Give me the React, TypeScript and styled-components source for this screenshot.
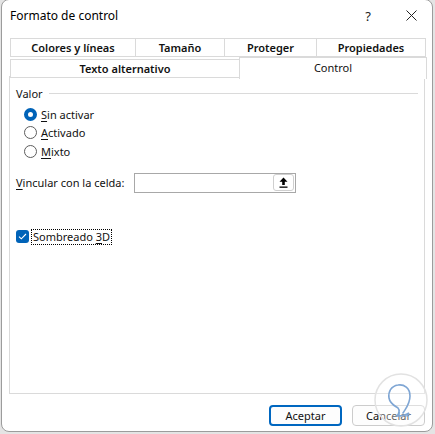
import styled, { createGlobalStyle } from 'styled-components';

const GlobalStyle = createGlobalStyle`
  html, body {
    margin: 0;
    padding: 0;
    background: #e4e4e4;
  }
  body {
    font-family: "Noto Sans", "Open Sans", sans-serif;
    font-size: 11px;
    color: #111;
  }
`;

// Dialog frame
const Window = styled.div`
  position: relative;
  box-sizing: border-box;
  width: 432px;
  height: 433px;
  margin-left: 1px;
  margin-top: -1px;
  background: #ffffff;
  border: 1px solid #9c9c9c;
  border-radius: 8px;
  display: flex;
  flex-direction: column;
  padding: 0 7px 0 6px;
  overflow: hidden;
`;

const TitleBar = styled.div`
  height: 31px;
  display: flex;
  align-items: center;
  padding-left: 2px;
  box-sizing: border-box;
`;

const Title = styled.div`
  flex: 1;
  font-size: 12px;
  color: #000;
`;

const TitleButton = styled.div`
  width: 26px;
  display: flex;
  justify-content: center;
  align-items: center;
  font-size: 13px;
  color: #222;
  margin-left: 16px;
  margin-right: 1px;
`;

const TabsArea = styled.div`
  margin-top: 7px;
  margin-left: 2px;
  display: flex;
  flex-direction: column;
  position: relative;
  z-index: 2;
`;

const TabRow = styled.div<{ cols: string }>`
  display: grid;
  grid-template-columns: ${p => p.cols};
  height: 19px;
  align-items: end;
`;

const Tab = styled.div<{ active?: boolean }>`
  box-sizing: border-box;
  height: ${p => (p.active ? '22px' : '19px')};
  margin-bottom: ${p => (p.active ? '-1px' : '0')};
  border: 1px solid #dadada;
  border-bottom: ${p => (p.active ? 'none' : '1px solid #dadada')};
  margin-left: -1px;
  background: #fff;
  display: flex;
  align-items: center;
  justify-content: center;
  font-size: 11px;
  font-weight: ${p => (p.active ? 400 : 600)};
  color: #111;
  padding-bottom: ${p => (p.active ? '3px' : '0')};
  white-space: nowrap;
  &:first-child {
    margin-left: 0;
  }
`;

const Panel = styled.div`
  box-sizing: border-box;
  height: 318px;
  margin-left: 1px;
  border: 1px solid #dadada;
  padding: 8px 6px 0 6px;
  display: flex;
  flex-direction: column;
`;

const GroupHeader = styled.div`
  display: flex;
  align-items: center;
  height: 16px;
  &::after {
    content: '';
    flex: 1;
    height: 1px;
    background: #dadada;
    margin-left: 6px;
  }
`;

const RadioList = styled.div`
  display: flex;
  flex-direction: column;
  margin-top: 4px;
  padding-left: 8px;
`;

const RadioRow = styled.label`
  display: flex;
  align-items: center;
  height: 18.5px;
  gap: 4px;
`;

const RadioDot = styled.span<{ checked?: boolean }>`
  box-sizing: border-box;
  width: 13px;
  height: 13px;
  border-radius: 50%;
  border: ${p => (p.checked ? '4px solid #0063b8' : '1px solid #5d5d5d')};
  background: #fff;
`;

const Key = styled.span`
  text-decoration: underline;
  text-underline-offset: 2px;
`;

const LinkRow = styled.div`
  display: flex;
  align-items: center;
  margin-top: 12px;
  gap: 10px;
`;

const CellInput = styled.div`
  box-sizing: border-box;
  width: 162px;
  height: 20px;
  border: 1px solid #a8a8a8;
  display: flex;
  justify-content: flex-end;
  align-items: center;
  padding-right: 1px;
`;

const PickButton = styled.div`
  box-sizing: border-box;
  width: 21px;
  height: 17px;
  border: 1px solid #cfcfcf;
  border-radius: 3px;
  display: flex;
  align-items: center;
  justify-content: center;
`;

const CheckRow = styled.div`
  display: flex;
  align-items: center;
  gap: 3px;
  margin-top: 37px;
`;

const CheckBox = styled.span`
  width: 13px;
  height: 13px;
  border-radius: 3px;
  background: #0063b8;
  display: flex;
  align-items: center;
  justify-content: center;
`;

const FocusLabel = styled.span`
  outline: 1px dotted #000;
  outline-offset: 0;
  padding: 0 1px;
  line-height: 14px;
`;

const Footer = styled.div`
  display: flex;
  justify-content: flex-end;
  gap: 10px;
  margin-top: 11px;
`;

const Button = styled.div<{ primary?: boolean }>`
  box-sizing: border-box;
  width: 73px;
  height: 21px;
  border-radius: 4px;
  border: ${p => (p.primary ? '2px solid #0067c0' : '1px solid #cccccc')};
  background: #fdfdfd;
  display: flex;
  align-items: center;
  justify-content: center;
  font-size: 11px;
  color: #111;
`;

const Watermark = styled.svg`
  position: absolute;
  right: 3px;
  bottom: 3px;
  pointer-events: none;
`;

export default function App() {
  return (
    <>
      <GlobalStyle />
      <Window>
        <TitleBar>
          <Title>Formato de control</Title>
          <TitleButton>?</TitleButton>
          <TitleButton>
            <svg width="11" height="11" viewBox="0 0 11 11">
              <path d="M0.5 0.5 L10.5 10.5 M10.5 0.5 L0.5 10.5" stroke="#222" strokeWidth="1" />
            </svg>
          </TitleButton>
        </TitleBar>

        <TabsArea>
          <TabRow cols="126px 89px 92px 109px">
            <Tab>Colores y líneas</Tab>
            <Tab>Tamaño</Tab>
            <Tab>Proteger</Tab>
            <Tab>Propiedades</Tab>
          </TabRow>
          <TabRow cols="230px 187px">
            <Tab>Texto alternativo</Tab>
            <Tab active>Control</Tab>
          </TabRow>
        </TabsArea>

        <Panel>
          <GroupHeader>Valor</GroupHeader>
          <RadioList>
            <RadioRow>
              <RadioDot checked />
              <span><Key>S</Key>in activar</span>
            </RadioRow>
            <RadioRow>
              <RadioDot />
              <span><Key>A</Key>ctivado</span>
            </RadioRow>
            <RadioRow>
              <RadioDot />
              <span><Key>M</Key>ixto</span>
            </RadioRow>
          </RadioList>

          <LinkRow>
            <span><Key>V</Key>incular con la celda:</span>
            <CellInput>
              <PickButton>
                <svg width="9" height="11" viewBox="0 0 9 11">
                  <path d="M4.5 0.5 L8.5 4.8 L5.8 4.8 L5.8 8 L3.2 8 L3.2 4.8 L0.5 4.8 Z" fill="#000" />
                  <rect x="0.5" y="9.5" width="8" height="1.3" fill="#000" />
                </svg>
              </PickButton>
            </CellInput>
          </LinkRow>

          <CheckRow>
            <CheckBox>
              <svg width="9" height="7" viewBox="0 0 9 7">
                <path d="M1 3.6 L3.3 5.8 L8 1" stroke="#fff" strokeWidth="1.1" fill="none" />
              </svg>
            </CheckBox>
            <FocusLabel>Sombreado <Key>3</Key>D</FocusLabel>
          </CheckRow>
        </Panel>

        <Footer>
          <Button primary>Aceptar</Button>
          <Button>Cancelar</Button>
        </Footer>

        <Watermark width="56" height="56" viewBox="0 0 56 56">
          <circle cx="28" cy="28" r="26" fill="rgba(255,255,255,0.35)" stroke="#e2e2e2" strokeWidth="1.5" />
          <path
            d="M30 41 C33 36 37 32 37 24 C37 16 31 12 25 13 C18 14 15 20 16 26 C17 32 22 34 25 36 C27 38 26 42 24 44 C29 44 33 43 36 41 L34 44"
            fill="none"
            stroke="#7fa6d4"
            strokeWidth="1.6"
            strokeLinecap="round"
          />
        </Watermark>
      </Window>
    </>
  );
}
